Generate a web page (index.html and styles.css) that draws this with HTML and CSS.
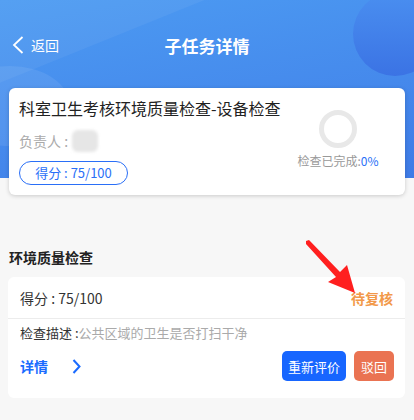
FILE: index.html
```html
<!DOCTYPE html>
<html lang="zh-CN">
<head>
  <meta charset="UTF-8">
  <meta name="viewport" content="width=device-width, initial-scale=1.0">
  <title>子任务详情</title>
  <link rel="stylesheet" href="styles.css">
</head>
<body>
  <!-- Blue header with the summary card -->
  <header class="top">
    <div class="deco-layer">
      <span class="deco deco-band"></span>
      <span class="deco deco-right"></span>
      <span class="deco deco-left"></span>
    </div>

    <nav class="nav">
      <a class="back" href="#">
        <svg class="back-icon" width="12" height="18" viewBox="0 0 12 18">
          <polyline points="10.5,1 2,9 10.5,17" fill="none" stroke="#fff" stroke-width="1.8"/>
        </svg>
        <span>返回</span>
      </a>
      <h1 class="nav-title">子任务详情</h1>
    </nav>

    <section class="summary">
      <div class="summary-main">
        <h2 class="summary-title">科室卫生考核环境质量检查-设备检查</h2>
        <p class="owner">负责人 :<span class="owner-name"></span></p>
        <span class="score-pill">得分 : 75/100</span>
      </div>
      <div class="progress">
        <span class="ring"></span>
        <p class="progress-text">检查已完成:<em>0%</em></p>
      </div>
    </section>
  </header>

  <main>
    <h3 class="group-title">环境质量检查</h3>

    <section class="item">
      <div class="item-head">
        <span>得分 : 75/100</span>
        <span class="status">待复核</span>
      </div>
      <p class="item-desc">检查描述 :<span>公共区域的卫生是否打扫干净</span></p>
      <div class="item-foot">
        <a class="detail" href="#">详情
          <svg width="9" height="15" viewBox="0 0 9 15">
            <polyline points="1.5,1 7.5,7.5 1.5,14" fill="none" stroke="#1a6bff" stroke-width="2"/>
          </svg>
        </a>
        <div class="actions">
          <button class="btn btn-blue">重新评价</button>
          <button class="btn btn-red">驳回</button>
        </div>
      </div>
    </section>
  </main>

  <!-- Annotation arrow over the status label -->
  <svg class="arrow" width="70" height="60" viewBox="0 0 70 60">
    <polygon points="14,1 17,0 48,32 55,25 63,53 36,42 44,37 14,4" fill="#ff1f1f"/>
  </svg>
</body>
</html>
```

FILE: styles.css
```css
/* Page base */
body {
  margin: 0;
  background-color: #f7f7f7;
  font-family: "Noto Sans CJK SC", "Noto Sans", sans-serif;
  color: #222;
  position: relative;
  height: 420px;
  overflow: hidden;
}

h1, h2, h3, p {
  margin: 0;
}

a {
  text-decoration: none;
}

/* Header */
.top {
  position: relative;
  background: linear-gradient(170deg, #4c9bf2 0%, #4589ec 60%, #3f7be6 100%);
  display: flex;
  flex-direction: column;
}

.deco-layer {
  position: absolute;
  inset: 0;
  overflow: hidden;
}

.deco {
  position: absolute;
  border-radius: 50%;
}

.deco-right {
  width: 84px;
  height: 84px;
  left: 353px;
  top: -8px;
  background: linear-gradient(180deg, #4a8ff0, #3b73e4);
}

.deco-left {
  width: 120px;
  height: 80px;
  left: -50px;
  top: 66px;
  background: rgba(255, 255, 255, 0.08);
}

.deco-band {
  width: 500px;
  height: 160px;
  left: -160px;
  top: -120px;
  border-radius: 0;
  transform: rotate(-22deg);
  background: rgba(255, 255, 255, 0.05);
}

.nav {
  position: relative;
  height: 86px;
  padding-top: 2px;
  display: flex;
  align-items: center;
  justify-content: center;
}

.back {
  position: absolute;
  left: 12px;
  display: flex;
  align-items: center;
  gap: 7px;
  color: #fff;
  font-size: 14px;
}

.nav-title {
  color: #fff;
  font-size: 17px;
  font-weight: bold;
}

/* Summary card */
.summary {
  position: relative;
  margin: 0 9px -17px;
  height: 107px;
  box-sizing: border-box;
  background: #fff;
  border-radius: 6px;
  box-shadow: 0 1px 4px rgba(0, 0, 0, 0.18);
  display: flex;
  padding: 9px 10px 0;
}

.summary-main {
  flex: 1;
  display: flex;
  flex-direction: column;
}

.summary-title {
  font-size: 16px;
  font-weight: normal;
  line-height: 22px;
  color: #222;
}

.owner {
  margin-top: 11px;
  font-size: 14px;
  line-height: 20px;
  color: #aaa;
  display: flex;
  align-items: center;
}

.owner-name {
  display: inline-block;
  width: 26px;
  height: 22px;
  margin-left: 4px;
  background: #e6e6e6;
  border-radius: 6px;
  filter: blur(1.5px);
}

.score-pill {
  align-self: flex-start;
  margin-top: 9px;
  width: 107px;
  height: 22px;
  border: 1px solid #2a6ff7;
  border-radius: 13px;
  color: #2a6ff7;
  font-size: 13px;
  line-height: 22px;
  text-align: center;
}

.progress {
  width: 100px;
  margin-right: 7px;
  display: flex;
  flex-direction: column;
  align-items: center;
  padding-top: 13px;
}

.ring {
  width: 28px;
  height: 28px;
  border: 5px solid #e8e8e8;
  border-radius: 50%;
}

.progress-text {
  margin-top: 5px;
  font-size: 12px;
  line-height: 16px;
  color: #999;
}

.progress-text em {
  font-style: normal;
  color: #2a6ff7;
}

/* Check item */
.group-title {
  margin: 69px 0 0 9px;
  font-size: 14px;
  line-height: 20px;
  font-weight: bold;
  color: #222;
}

.item {
  margin: 10px 9px 0 8px;
  background: #fff;
  border-radius: 6px;
  padding-bottom: 17px;
}

.item-head {
  height: 41px;
  padding: 0 12px;
  display: flex;
  align-items: center;
  justify-content: space-between;
  font-size: 14px;
  color: #333;
  border-bottom: 1px solid #ececec;
}

.status {
  color: #f2994a;
  font-weight: bold;
}

.item-desc {
  margin-top: 5px;
  padding: 0 12px;
  font-size: 13px;
  line-height: 18px;
  color: #333;
}

.item-desc span {
  color: #aaa;
}

.item-foot {
  margin-top: 9px;
  padding: 0 11px 0 12px;
  display: flex;
  align-items: center;
  justify-content: space-between;
}

.detail {
  display: flex;
  align-items: center;
  gap: 24px;
  font-size: 14px;
  font-weight: bold;
  color: #1a6bff;
}

.actions {
  display: flex;
  gap: 8px;
}

.btn {
  height: 30px;
  border: none;
  border-radius: 5px;
  color: #fff;
  font-family: inherit;
  font-size: 13px;
  padding: 0;
  white-space: nowrap;
}

.btn-blue {
  background: #1766ff;
  width: 64px;
}

.btn-red {
  background: #ea7352;
  width: 40px;
}

/* Annotation arrow */
.arrow {
  position: absolute;
  left: 292px;
  top: 240px;
}
```
